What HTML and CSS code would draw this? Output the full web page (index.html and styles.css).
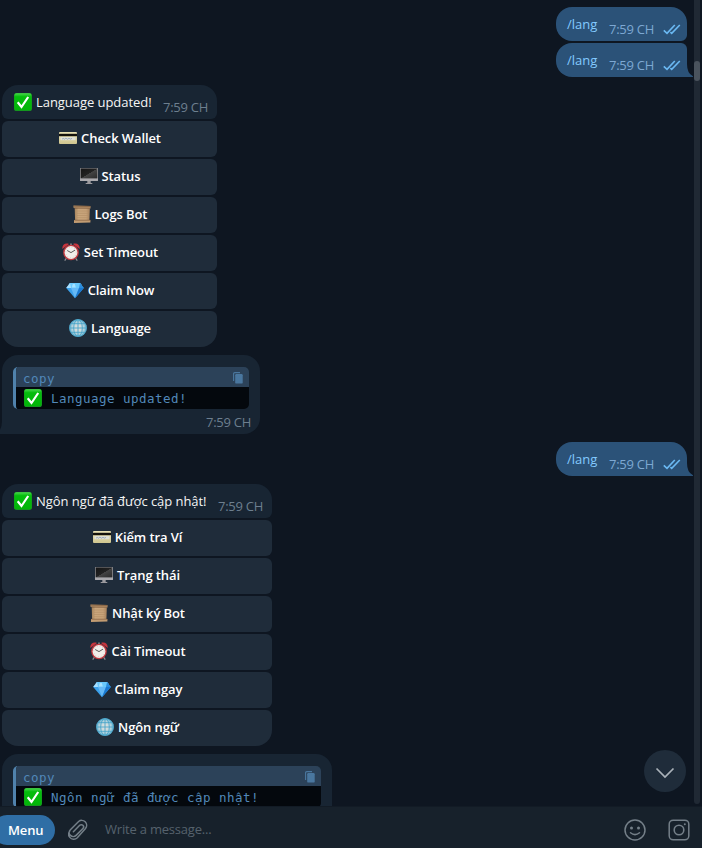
FILE: index.html
```html
<!DOCTYPE html>
<html lang="vi">
<head>
<meta charset="utf-8">
<title>Chat</title>
<link rel="stylesheet" href="styles.css">
</head>
<body>
<svg class="defs" width="0" height="0" aria-hidden="true">
  <defs>
    <linearGradient id="g-green" x1="0" y1="0" x2="0" y2="1"><stop offset="0" stop-color="#4bd64e"/><stop offset=".2" stop-color="#05bd0d"/><stop offset="1" stop-color="#02b408"/></linearGradient>
    <linearGradient id="g-card" x1="0" y1="0" x2="0" y2="1"><stop offset="0" stop-color="#e9e2b5"/><stop offset="1" stop-color="#cfc58f"/></linearGradient>
    <linearGradient id="g-screen" x1="0" y1="0" x2="1" y2="1"><stop offset="0" stop-color="#151515"/><stop offset=".5" stop-color="#222"/><stop offset=".52" stop-color="#444"/><stop offset="1" stop-color="#2a2a2a"/></linearGradient>
    <linearGradient id="g-paper" x1="0" y1="0" x2="1" y2="0"><stop offset="0" stop-color="#a5835c"/><stop offset=".25" stop-color="#c9a67c"/><stop offset=".75" stop-color="#c7a279"/><stop offset="1" stop-color="#a37f5a"/></linearGradient>
    <radialGradient id="g-globe"><stop offset="0" stop-color="#e4e2dc"/><stop offset=".6" stop-color="#c2d8df"/><stop offset="1" stop-color="#69b5d3"/></radialGradient>
  </defs>
  <symbol id="check" viewBox="0 0 18 18"><rect width="18" height="18" rx="2.6" fill="#1a8d26"/><rect x=".3" y=".3" width="17.2" height="17" rx="2.4" fill="url(#g-green)"/><path d="M3.7 9.2 7.5 14 14.2 4" fill="none" stroke="#fff" stroke-width="2.2"/></symbol>
  <symbol id="card" viewBox="0 0 18 18"><rect y="3" width="18" height="12" rx="1" fill="url(#g-card)"/><path d="M0 4.8h18v2.4H0z" fill="#14120c"/><path d="M1.5 8h15v3.2h-15z" fill="#dfe0d5"/><path d="M3 10.2l1.2-.8 1.2.8 1.5-1 1.6 1 1.5-.9 1.4.8 1.6-.7" fill="none" stroke="#8193ad" stroke-width=".7"/></symbol>
  <symbol id="screen" viewBox="0 0 18 18"><rect y="1" width="18" height="13" rx=".5" fill="#aaa9ad"/><rect x=".6" y="1.4" width="16.8" height="10" fill="url(#g-screen)"/><path d="M7.3 14h3.4v2h1.6v1H5.7v-1h1.6z" fill="#9b9a9e"/></symbol>
  <symbol id="scroll" viewBox="0 0 18 18"><path d="M1.7 2.5h15.2l-.5 13H2.1z" fill="url(#g-paper)"/><path d="M4 6h11M4 8.3h11M4 10.5h11M4 12.7h11" stroke="#b18d64" stroke-width=".6"/><path d="M.5.5l17 .5v2.6L.5 2.7z" fill="#c09a70"/><path d="M.5 1.1l17 .3M1.5 3.1h15.6" stroke="#69472c" stroke-width=".7"/><path d="M1 15h16.4v2.4L1 17.9z" fill="#c29c72"/><path d="M1.4 15.2h16" stroke="#765236" stroke-width=".6"/></symbol>
  <symbol id="clock" viewBox="0 0 18 18"><path d="M4.8 14.6 2.7 17.7M13.2 14.6l2.1 3.1" stroke="#8b8c90" stroke-width="1.2"/><path d="M9 3V.4" stroke="#aaa" stroke-width="1.2"/><path d="M.4 5.9C-.2 2.2 3-.6 7 1zM17.6 5.9C18.2 2.2 15-.6 11 1z" fill="#c8353d"/><circle cx="9" cy="9.5" r="7.8" fill="#c23b41"/><circle cx="9" cy="9.5" r="6.4" fill="#f1eeea"/><circle cx="9" cy="9.5" r="5.3" fill="none" stroke="#b9b3af" stroke-width=".7" stroke-dasharray=".7 2.07"/><path d="M5.2 7.5 9 9.6l4-2.5" fill="none" stroke="#333" stroke-width=".8"/></symbol>
  <symbol id="gem" viewBox="0 0 18 18"><path d="M4 2h10l3.8 5L9 17.2.2 7z" fill="#3ca2ec"/><path d="M4 2h10l1.6 1.6L13 7H5L2.6 3.8z" fill="#69c8fb"/><path d="M5 7h8L9 16.8z" fill="#66b9f6"/><path d="M4 2 .2 7H5z" fill="#a9e0ff"/><path d="m14 2 3.8 5H13z" fill="#2b8cdc"/><path d="M13 7h4.8L9 17.2z" fill="#1a79d1"/><path d="m6.8 3-1 3.5h4L8.8 3z" fill="#a7e1ff"/></symbol>
  <symbol id="globe" viewBox="0 0 18 18"><circle cx="9" cy="9" r="8.7" fill="url(#g-globe)"/><g fill="none" stroke="#48a5ca" stroke-width=".9"><circle cx="9" cy="9" r="8.4"/><ellipse cx="9" cy="9" rx="4.3" ry="8.4"/><path d="M9 .5v17M.5 9h17M2.1 4.7h13.8M2.1 13.3h13.8"/></g></symbol>
  <symbol id="ticks" viewBox="0 0 18 11"><path d="M.8 6.4 4 9.4 11.8 1M7.4 8.2l1.3 1.2L16.8 1" fill="none" stroke="#6bb9f3" stroke-width="1.6"/></symbol>
  <symbol id="copy" viewBox="0 0 10 12"><path d="M.6 9V1.8Q.6.6 1.8.6H7" fill="none" stroke="#4a779f" stroke-width="1.1"/><rect x="2.2" y="2" width="7.5" height="9.6" rx="1.2" fill="#4a779f"/></symbol>
  <symbol id="tail" viewBox="0 0 10 13"><path d="M0 0h4Q4 9.500 10 12.200V13H0z" fill="currentColor"/></symbol>
</svg>

<main class="chat">
  <div class="out"><span class="cmd">/lang</span><time>7:59 CH</time><svg class="ticks"><use href="#ticks"/></svg></div>
  <div class="out out-last"><span class="cmd">/lang</span><time>7:59 CH</time><svg class="ticks"><use href="#ticks"/></svg><svg class="tail"><use href="#tail"/></svg></div>

  <section class="card card-en">
    <div class="head"><svg class="emoji"><use href="#check"/></svg><span class="text">Language updated!</span><time>7:59 CH</time></div>
    <button><svg class="emoji"><use href="#card"/></svg>Check Wallet</button>
    <button><svg class="emoji"><use href="#screen"/></svg>Status</button>
    <button><svg class="emoji"><use href="#scroll"/></svg>Logs Bot</button>
    <button><svg class="emoji"><use href="#clock"/></svg>Set Timeout</button>
    <button><svg class="emoji"><use href="#gem"/></svg>Claim Now</button>
    <button><svg class="emoji"><use href="#globe"/></svg>Language</button>
  </section>

  <section class="snippet snippet-en">
    <div class="code">
      <div class="code-head">copy<svg class="copy"><use href="#copy"/></svg></div>
      <div class="code-body"><svg class="emoji"><use href="#check"/></svg>Language updated!</div>
    </div>
    <time>7:59 CH</time>
    <svg class="tail tail-left"><use href="#tail"/></svg>
  </section>

  <div class="out out-last"><span class="cmd">/lang</span><time>7:59 CH</time><svg class="ticks"><use href="#ticks"/></svg><svg class="tail"><use href="#tail"/></svg></div>

  <section class="card card-vi">
    <div class="head"><svg class="emoji"><use href="#check"/></svg><span class="text">Ngôn ngữ đã được cập nhật!</span><time>7:59 CH</time></div>
    <button><svg class="emoji"><use href="#card"/></svg>Kiểm tra Ví</button>
    <button><svg class="emoji"><use href="#screen"/></svg>Trạng thái</button>
    <button><svg class="emoji"><use href="#scroll"/></svg>Nhật ký Bot</button>
    <button><svg class="emoji"><use href="#clock"/></svg>Cài Timeout</button>
    <button><svg class="emoji"><use href="#gem"/></svg>Claim ngay</button>
    <button><svg class="emoji"><use href="#globe"/></svg>Ngôn ngữ</button>
  </section>

  <section class="snippet snippet-vi">
    <div class="code">
      <div class="code-head">copy<svg class="copy"><use href="#copy"/></svg></div>
      <div class="code-body"><svg class="emoji"><use href="#check"/></svg>Ngôn ngữ đã được cập nhật!</div>
    </div>
  </section>

  <div class="scrollbar"><div class="thumb"></div></div>
  <div class="jump"><svg width="20" height="12" viewBox="0 0 20 12"><path d="m1.500 1.500 8.500 8.500 8.500-8.500" fill="none" stroke="#aab2b9" stroke-width="1.7"/></svg></div>
</main>

<footer class="composer">
  <div class="menu">Menu</div>
  <svg class="clip" width="20" height="22" viewBox="0 0 20 22"><path d="M5.400 12.800 11.700 6.300a2.200 2.200 0 0 1 3.200 3.200L8.100 16.400a4 4 0 0 1-5.700-5.700L10.600 2.500a4.900 4.900 0 0 1 6.900 6.900L9.300 18.800a5 5 0 0 1-7.500-.4 5 5 0 0 1-.2-6" fill="none" stroke="#747f88" stroke-width="1.500" stroke-linecap="round"/></svg>
  <span class="placeholder">Write a message...</span>
  <svg class="smile" width="22" height="22" viewBox="0 0 22 22"><circle cx="11" cy="11" r="10" fill="none" stroke="#747f88" stroke-width="1.500"/><circle cx="7.500" cy="9" r="1.500" fill="#747f88"/><circle cx="14.500" cy="9" r="1.500" fill="#747f88"/><path d="M6.500 13.700q4.500 3.800 9 0" fill="none" stroke="#747f88" stroke-width="1.500" stroke-linecap="round"/></svg>
  <svg class="camera" width="22" height="22" viewBox="0 0 22 22"><rect x="1.200" y="1.200" width="19.600" height="19.600" rx="4" fill="none" stroke="#747f88" stroke-width="1.500"/><circle cx="11" cy="11" r="4.800" fill="none" stroke="#747f88" stroke-width="1.600"/><circle cx="16.800" cy="5.200" r="1" fill="#747f88"/></svg>
</footer>
</body>
</html>
```
FILE: styles.css
```css
* { box-sizing: border-box; }

body {
  margin: 0;
  width: 702px;
  height: 848px;
  overflow: hidden;
  display: flex;
  flex-direction: column;
  background: #0e1621;
  color: #f5f5f5;
  font: 13px/18px "Open Sans", "Noto Sans", sans-serif;
}

svg { display: block; flex: none; }
.defs { position: absolute; }
.emoji { width: 18px; height: 18px; }

.chat {
  position: relative;
  flex: none;
  height: 806px;
  padding: 7px 15px 0 2px;
  overflow: hidden;
  display: flex;
  flex-direction: column;
  align-items: flex-start;
}

time { color: #6d7f8f; white-space: nowrap; letter-spacing: -.27px; }

.out {
  position: relative;
  flex: none;
  align-self: flex-end;
  display: flex;
  width: 131px;
  height: 34px;
  padding: 8px 0 0 11px;
  margin-bottom: 2px;
  background: #2b5278;
  border-radius: 16px 16px 6px 16px;
}
.out-last { margin-bottom: 8px; border-radius: 16px 6px 0 16px; }
.out-last ~ .snippet ~ .out-last { border-top-right-radius: 16px; }
.cmd { width: 42px; color: #83caff; }
.out time { padding-top: 5px; width: 54px; color: #7da8d3; }
.ticks { width: 18px; height: 11px; margin-top: 9px; }
.tail { position: absolute; right: -6px; bottom: 0; width: 10px; height: 13px; color: #2b5278; }
.tail-left { right: auto; left: -6px; color: #182533; transform: scaleX(-1); }

.card { flex: none; display: flex; flex-direction: column; gap: 2px; margin-bottom: 8px; }
.card-en { width: 215px; }
.card-vi { width: 270px; }
.head {
  display: flex;
  height: 34px;
  padding: 8px 9px 0 12px;
  background: #182533;
  border-radius: 16px 16px 6px 6px;
}
.head .text { margin-left: 4px; white-space: nowrap; letter-spacing: -.05px; }
.head time { margin-left: auto; padding-top: 5px; }
button {
  display: flex;
  align-items: center;
  justify-content: center;
  gap: 4px;
  height: 36px;
  padding: 0 0 2px 1px;
  border: 0;
  border-radius: 6px;
  background: #1f2c3a;
  color: #fff;
  font: 600 13px/18px "Open Sans", "Noto Sans", sans-serif;
  letter-spacing: -.1px;
}
button:last-child { border-radius: 6px 6px 16px 16px; }

.snippet {
  position: relative;
  flex: none;
  display: flex;
  flex-direction: column;
  height: 79px;
  padding: 12px 11px 0;
  margin-bottom: 8px;
  background: #182533;
  border-radius: 16px 16px 16px 0;
}
.snippet-en { width: 258px; }
.snippet-vi { width: 330px; }
.snippet time { align-self: flex-end; margin: 4px -2px 0 0; }
.code {
  border-left: 3px solid #5082ac;
  border-radius: 5px;
  overflow: hidden;
  color: #5288b9;
  font: 12.5px/20px "DejaVu Sans Mono", monospace;
  letter-spacing: .47px;
}
.code-head {
  display: flex;
  justify-content: space-between;
  height: 20px;
  padding: 2px 6px 0 7px;
  background: #2c4259;
}
.copy { width: 10px; height: 12px; margin-top: 3px; }
.code-body {
  display: flex;
  gap: 9px;
  height: 22px;
  padding: 2px 0 0 8px;
  background: #04080d;
  white-space: nowrap;
}

.scrollbar {
  position: absolute;
  right: 2px;
  top: 0;
  width: 6px;
  height: 804px;
  padding-top: 61px;
  border-radius: 0 0 3px 3px;
  background: #202934;
}
.thumb { height: 20px; border-radius: 3px; background: #4a535d; }
.jump {
  position: absolute;
  left: 644px;
  top: 750px;
  width: 42px;
  height: 42px;
  padding-top: 4px;
  display: flex;
  align-items: center;
  justify-content: center;
  border-radius: 50%;
  background: #1f2c3a;
}

.composer {
  display: flex;
  align-items: center;
  height: 42px;
  padding: 5px 12px 0 0;
  border-top: 1px solid #121b25;
  background: #17212b;
}
.menu {
  width: 63px;
  height: 30px;
  margin-left: -8px;
  padding-left: 16px;
  border-radius: 15px;
  background: #2f6ea5;
  color: #fff;
  font-weight: 600;
  line-height: 30px;
  letter-spacing: -.15px;
}
.clip { margin-left: 13px; }
.placeholder { flex: 1; margin: -2px 0 0 17px; letter-spacing: -.2px; color: #56626d; }
.smile { margin-right: 22px; }
```
